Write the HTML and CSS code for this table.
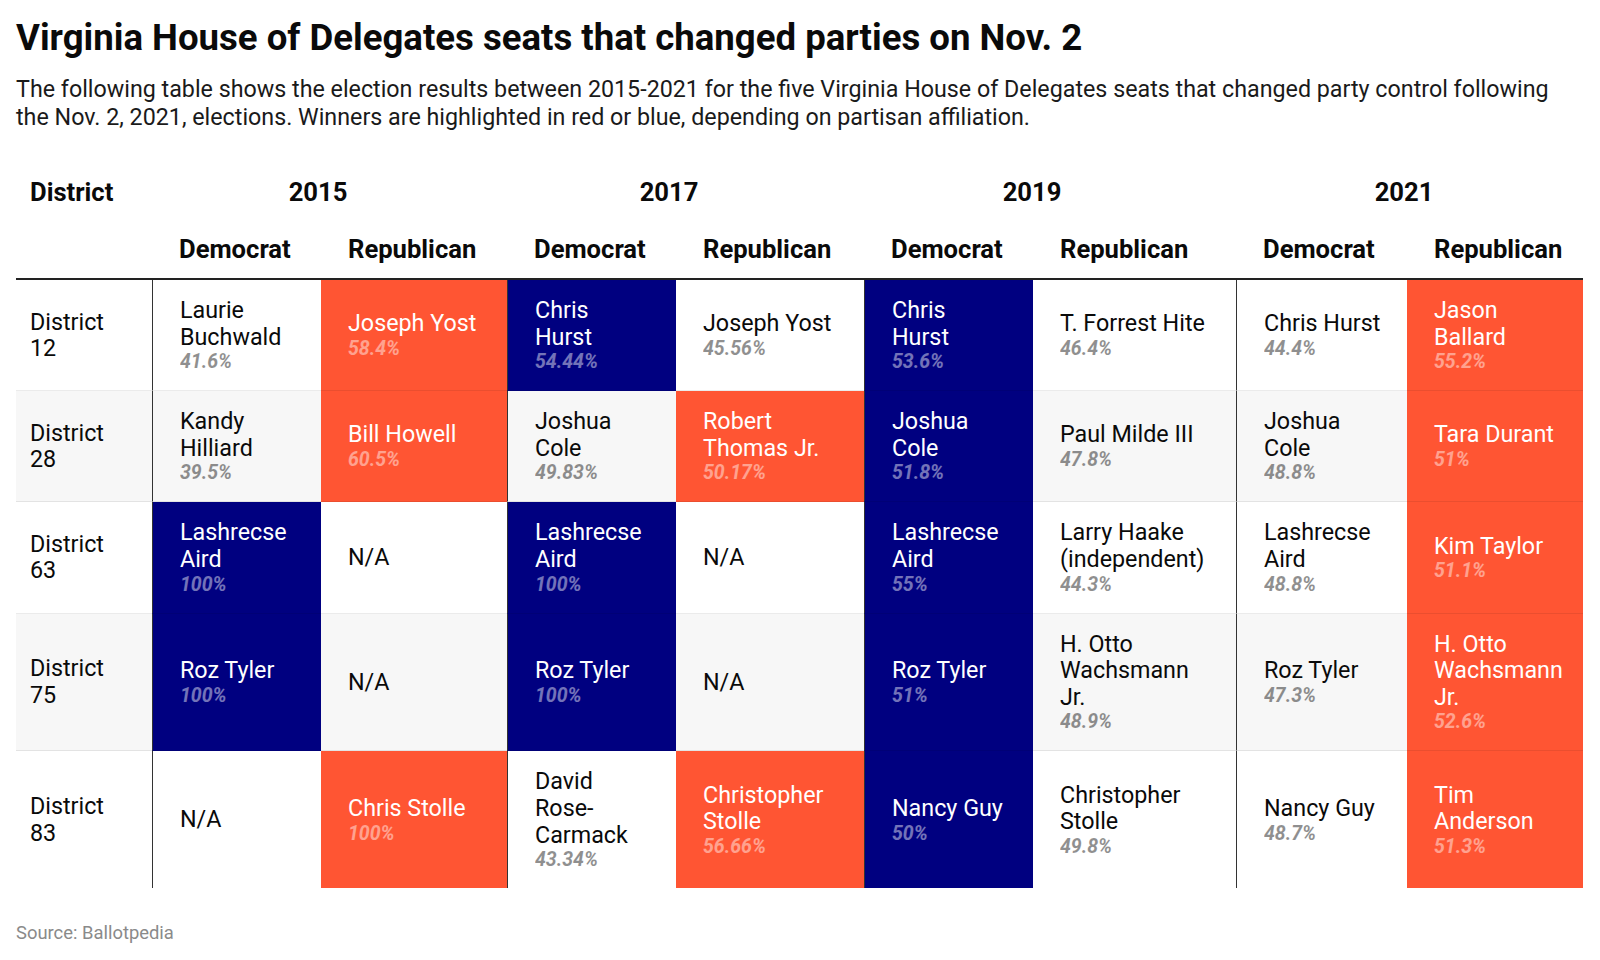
FILE: index.html
```html
<!DOCTYPE html>
<html lang="en">
<head>
<meta charset="utf-8">
<title>Virginia House of Delegates seats that changed parties on Nov. 2</title>
<link rel="stylesheet" href="styles.css">
</head>
<body>
<main class="chart">
  <h1 class="title">Virginia House of Delegates seats that changed parties on Nov. 2</h1>
  <p class="intro">The following table shows the election results between 2015-2021 for the five Virginia House of Delegates seats that changed party control following the Nov. 2, 2021, elections. Winners are highlighted in red or blue, depending on partisan affiliation.</p>

  <div class="table">
    <div class="th th-year th-district">District</div>
    <div class="th th-year year"><span>2015</span></div>
    <div class="th th-year"></div>
    <div class="th th-year year y2017"><span>2017</span></div>
    <div class="th th-year"></div>
    <div class="th th-year year y2019"><span>2019</span></div>
    <div class="th th-year"></div>
    <div class="th th-year year"><span>2021</span></div>
    <div class="th th-year"></div>

    <div class="th th-party th-district"></div>
    <div class="th th-party party">Democrat</div>
    <div class="th th-party party">Republican</div>
    <div class="th th-party party">Democrat</div>
    <div class="th th-party party">Republican</div>
    <div class="th th-party party">Democrat</div>
    <div class="th th-party party">Republican</div>
    <div class="th th-party party">Democrat</div>
    <div class="th th-party party">Republican</div>

    <!-- District 12 -->
    <div class="td district odd">District 12</div>
    <div class="td dem odd"><span class="name">Laurie Buchwald</span><span class="pct">41.6%</span></div>
    <div class="td rep odd win-r"><span class="name">Joseph Yost</span><span class="pct">58.4%</span></div>
    <div class="td dem odd win-d"><span class="name">Chris Hurst</span><span class="pct">54.44%</span></div>
    <div class="td rep odd"><span class="name">Joseph Yost</span><span class="pct">45.56%</span></div>
    <div class="td dem odd win-d"><span class="name">Chris Hurst</span><span class="pct">53.6%</span></div>
    <div class="td rep odd"><span class="name nowrap">T. Forrest Hite</span><span class="pct">46.4%</span></div>
    <div class="td dem odd"><span class="name nowrap">Chris Hurst</span><span class="pct">44.4%</span></div>
    <div class="td rep odd win-r"><span class="name">Jason Ballard</span><span class="pct">55.2%</span></div>

    <!-- District 28 -->
    <div class="td district even">District 28</div>
    <div class="td dem even"><span class="name">Kandy Hilliard</span><span class="pct">39.5%</span></div>
    <div class="td rep even win-r"><span class="name">Bill Howell</span><span class="pct">60.5%</span></div>
    <div class="td dem even"><span class="name">Joshua Cole</span><span class="pct">49.83%</span></div>
    <div class="td rep even win-r"><span class="name">Robert Thomas Jr.</span><span class="pct">50.17%</span></div>
    <div class="td dem even win-d"><span class="name">Joshua Cole</span><span class="pct">51.8%</span></div>
    <div class="td rep even"><span class="name">Paul Milde III</span><span class="pct">47.8%</span></div>
    <div class="td dem even"><span class="name">Joshua Cole</span><span class="pct">48.8%</span></div>
    <div class="td rep even win-r"><span class="name nowrap">Tara Durant</span><span class="pct">51%</span></div>

    <!-- District 63 -->
    <div class="td district odd">District 63</div>
    <div class="td dem odd win-d"><span class="name">Lashrecse Aird</span><span class="pct">100%</span></div>
    <div class="td rep odd"><span class="name">N/A</span></div>
    <div class="td dem odd win-d"><span class="name">Lashrecse Aird</span><span class="pct">100%</span></div>
    <div class="td rep odd"><span class="name">N/A</span></div>
    <div class="td dem odd win-d"><span class="name">Lashrecse Aird</span><span class="pct">55%</span></div>
    <div class="td rep odd"><span class="name">Larry Haake (independent)</span><span class="pct">44.3%</span></div>
    <div class="td dem odd"><span class="name">Lashrecse Aird</span><span class="pct">48.8%</span></div>
    <div class="td rep odd win-r"><span class="name">Kim Taylor</span><span class="pct">51.1%</span></div>

    <!-- District 75 -->
    <div class="td district even">District 75</div>
    <div class="td dem even win-d"><span class="name">Roz Tyler</span><span class="pct">100%</span></div>
    <div class="td rep even"><span class="name">N/A</span></div>
    <div class="td dem even win-d"><span class="name">Roz Tyler</span><span class="pct">100%</span></div>
    <div class="td rep even"><span class="name">N/A</span></div>
    <div class="td dem even win-d"><span class="name">Roz Tyler</span><span class="pct">51%</span></div>
    <div class="td rep even"><span class="name">H. Otto Wachsmann Jr.</span><span class="pct">48.9%</span></div>
    <div class="td dem even"><span class="name">Roz Tyler</span><span class="pct">47.3%</span></div>
    <div class="td rep even win-r"><span class="name">H. Otto Wachsmann Jr.</span><span class="pct">52.6%</span></div>

    <!-- District 83 -->
    <div class="td district odd last">District 83</div>
    <div class="td dem odd last"><span class="name">N/A</span></div>
    <div class="td rep odd last win-r"><span class="name">Chris Stolle</span><span class="pct">100%</span></div>
    <div class="td dem odd last"><span class="name">David Rose-Carmack</span><span class="pct">43.34%</span></div>
    <div class="td rep odd last win-r"><span class="name">Christopher Stolle</span><span class="pct">56.66%</span></div>
    <div class="td dem odd last win-d"><span class="name nowrap">Nancy Guy</span><span class="pct">50%</span></div>
    <div class="td rep odd last"><span class="name">Christopher Stolle</span><span class="pct">49.8%</span></div>
    <div class="td dem odd last"><span class="name nowrap">Nancy Guy</span><span class="pct">48.7%</span></div>
    <div class="td rep odd last win-r"><span class="name">Tim Anderson</span><span class="pct">51.3%</span></div>
  </div>

  <p class="source">Source: Ballotpedia</p>
</main>
</body>
</html>
```

FILE: styles.css
```css
* { box-sizing: border-box; }

html, body {
  margin: 0;
  padding: 0;
  background: #ffffff;
}

body {
  font-family: Roboto, "Liberation Sans", Arial, sans-serif;
  color: #0a0a0a;
}

.chart {
  display: flex;
  flex-direction: column;
  padding: 18px 17px 0 16px;
}

.title {
  margin: 0;
  font-size: 36.6px;
  line-height: 40px;
  font-weight: 700;
  color: #0a0a0a;
}

.intro {
  margin: 18px 0 0 0;
  max-width: 1545px;
  font-size: 23.27px;
  line-height: 27.5px;
  font-weight: 400;
  color: #1a1a1a;
}

.table {
  margin-top: 33px;
  display: grid;
  grid-template-columns: 136px 169px 186px 169px 188px 169px 203px 171px 176px;
}

.th {
  font-weight: 700;
  font-size: 25.6px;
  color: #0a0a0a;
  display: flex;
  align-items: center;
}

.th-year {
  height: 56px;
}

.th-party {
  height: 60px;
  border-bottom: 2px solid #222222;
  padding-top: 0;
}

.th-district {
  padding-left: 14px;
}

.year {
  justify-content: flex-end;
}

.year span {
  display: inline-block;
  transform: translateX(calc(50% - 3px));
}

.y2017 span {
  transform: translateX(calc(50% - 7px));
}

.y2019 span {
  transform: translateX(calc(50% - 1px));
}

.party {
  padding-left: 27px;
}

.td {
  display: flex;
  flex-direction: column;
  justify-content: center;
  padding: 17px 28px 17px 27px;
  font-size: 23.3px;
  border-bottom: 1px solid rgba(0, 0, 0, 0.08);
  color: #0a0a0a;
}

.td.last {
  border-bottom: none;
}

.td.odd { background: #ffffff; }
.td.even { background: #f7f7f7; }

.district {
  padding-left: 14px;
  line-height: 26.6px;
}

.dem {
  border-left: 1px solid #333333;
}

.name {
  line-height: 26.6px;
}

.nowrap {
  white-space: nowrap;
}

.pct {
  font-size: 19.5px;
  line-height: 23px;
  font-weight: 700;
  font-style: italic;
  opacity: 0.45;
}

.td.win-r {
  background: #ff5533;
  color: #ffffff;
}

.td.win-d {
  background: #000080;
  color: #ffffff;
}

.source {
  margin: 34px 0 0 0;
  font-size: 18.4px;
  line-height: 22px;
  color: #8a8a8a;
}
```
